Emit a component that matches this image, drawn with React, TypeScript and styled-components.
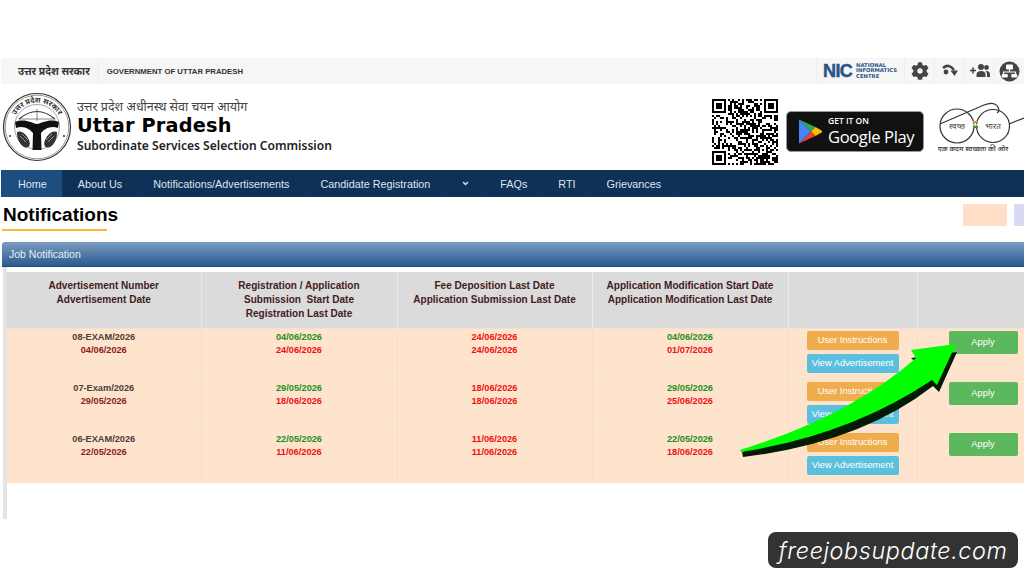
import React from "react"
import styled, {createGlobalStyle} from "styled-components"
import {FaCog, FaAngleDown} from "react-icons/fa"

const GlobalStyle = createGlobalStyle`
    html, body {
        margin: 0;
        padding: 0;
        background: #fff;
        font-family: "Liberation Sans", Arial, sans-serif;
    }
    #root {
        width: 1024px;
        height: 576px;
    }
`;

const Page = styled.div`
    position: relative;
    width: 1024px;
    height: 576px;
    padding-top: 58px;
    box-sizing: border-box;
    overflow: hidden;
    background: #fff;
`;

const TopBar = styled.div`
    display: flex;
    align-items: stretch;
    height: 26px;
    margin-left: 1px;
    background: #f6f6f6;
`;

const StateName = styled.div`
    display: flex;
    align-items: center;
    padding: 0 8px 0 17px;
    border-right: 1px solid #eee;
    font-family: "Noto Sans", "Liberation Sans", sans-serif;
    font-size: 10.3px;
    font-weight: 700;
    color: #333;
`;

const GovName = styled.div`
    display: flex;
    align-items: center;
    flex: 1;
    padding-left: 8px;
    font-size: 7.75px;
    font-weight: 700;
    color: #333;
`;

const NicCell = styled.div`
    display: flex;
    align-items: center;
    width: 88px;
    padding-left: 6px;
    box-sizing: border-box;
    border-left: 1px solid #eee;
    color: #2a5585;
`;

const NicMark = styled.span`
    width: 33px;
    font-size: 18px;
    font-weight: 700;
    letter-spacing: -0.6px;
    -webkit-text-stroke: 0.5px #2a5585;
`;

const NicWords = styled.span`
    font-family: "DejaVu Sans", sans-serif;
    font-size: 5.3px;
    font-weight: 700;
    line-height: 5.4px;
`;

const IconCell = styled.div`
    display: flex;
    align-items: center;
    justify-content: center;
    width: 30px;
    box-sizing: border-box;
    border-left: 1px solid #eee;
    color: #444;
`;

const Masthead = styled.header`
    display: flex;
    align-items: center;
    height: 86px;
    padding-left: 2px;
    box-sizing: border-box;
`;

const Titles = styled.div`
    display: flex;
    flex-direction: column;
    margin-left: 5px;
    margin-top: -2px;
    flex: 1;
`;

const HindiTitle = styled.div`
    font-family: "Noto Sans", "Liberation Sans", sans-serif;
    font-size: 12.5px;
    line-height: 16px;
    color: #444;
`;

const MainTitle = styled.div`
    font-family: "DejaVu Sans", sans-serif;
    font-size: 19.3px;
    font-weight: 700;
    line-height: 22px;
    letter-spacing: 0.2px;
    color: #000;
`;

const SubTitle = styled.div`
    font-family: "Noto Sans", sans-serif;
    font-size: 12.05px;
    line-height: 17px;
    font-weight: 600;
    color: #222;
`;

const QrSvg = styled.svg`
    margin-top: 10px;
`;

const PlayBadge = styled.div`
    display: flex;
    align-items: center;
    width: 138px;
    height: 41px;
    margin: 8px 0 0 8px;
    padding-left: 11px;
    box-sizing: border-box;
    border-radius: 5px;
    background: #111;
    border: 1px solid #999;
    color: #fff;
`;

const PlayText = styled.div`
    display: flex;
    flex-direction: column;
    margin-left: 6px;
`;

const PlaySmall = styled.span`
    font-family: "Open Sans", sans-serif;
    font-size: 8.5px;
    line-height: 10px;
    font-weight: 600;
`;

const PlayBig = styled.span`
    font-family: "Open Sans", sans-serif;
    font-size: 16.6px;
    line-height: 21px;
    font-weight: 500;
    letter-spacing: -0.4px;
`;

const SwachhSvg = styled.svg`
    margin: -4px 0 0 4px;
    flex: none;
`;

const Nav = styled.nav`
    display: flex;
    align-items: stretch;
    height: 27px;
    margin-left: 1px;
    background: #0f3057;
`;

const NavItem = styled.div<{$active?: boolean}>`
    display: flex;
    align-items: center;
    padding: 0 15px;
    font-size: 10.8px;
    color: #dfe6ee;
    border-right: 1px solid #12355f;
    background: ${(props): string => props.$active ? "#1e4d80" : "transparent"};

    &:first-child{
        padding-left: 17px;
    }
`;

const NavCaret = styled(NavItem)`
    padding: 0 14px 0 15px;
`;

const HeadingRow = styled.div`
    display: flex;
    justify-content: space-between;
    align-items: flex-start;
    height: 45px;
    padding: 7px 0 0 2px;
    box-sizing: border-box;
`;

const Heading = styled.h2`
    margin: 0;
    width: 104px;
    padding: 0 0 3px 1px;
    border-bottom: 2px solid #fbb83a;
    font-size: 19px;
    line-height: 22px;
    font-weight: 700;
    white-space: nowrap;
    color: #000;
`;

const Pills = styled.div`
    display: flex;
    gap: 7px;
    width: 61px;
`;

const Pill = styled.div<{$color: string; $width: number}>`
    height: 22px;
    width: ${(props): number => props.$width}px;
    background: ${(props): string => props.$color};
`;

const Panel = styled.section`
    margin-left: 2px;
`;

const PanelHead = styled.div`
    display: flex;
    align-items: center;
    height: 24px;
    padding-left: 7px;
    border-radius: 3px 0 0 0;
    font-size: 10.5px;
    color: #e6edf5;
    background: linear-gradient(#7b9cc1, #2a5a8e);
    border-bottom: 1px solid #1c4a7b;
`;

const PanelBody = styled.div`
    height: 252px;
    padding-top: 5px;
    box-sizing: border-box;
    margin-left: 1px;
    border-left: 4px solid #e4e4e4;
`;

const Table = styled.table`
    width: 1042px;
    border-collapse: collapse;
    table-layout: fixed;
`;

const Th = styled.th<{$width: number}>`
    width: ${(props): number => props.$width}px;
    height: 56px;
    padding: 7px 4px 0;
    box-sizing: border-box;
    vertical-align: top;
    background: #dcdbdb;
    border-right: 1px solid #e8e8e8;
    font-size: 10.05px;
    line-height: 14px;
    font-weight: 700;
    color: #43201f;
`;

const Td = styled.td<{$height: number}>`
    height: ${(props): number => props.$height}px;
    padding: 2px 4px 0;
    box-sizing: border-box;
    vertical-align: top;
    text-align: center;
    background: #fee3cd;
    border-right: 1px solid #f3ddcb;
    border-top: 1px solid #f4e0d0;
`;

const CellLine = styled.div<{$tone: "dark" | "maroon" | "green" | "red"}>`
    font-size: 9.2px;
    line-height: 13px;
    font-weight: 700;
    color: ${(props): string => ({
        dark: "#4a4038",
        maroon: "#8c1c1c",
        green: "#1f8f1f",
        red: "#f01010",
    })[props.$tone]};
`;

const Btn = styled.div<{$color: string; $width: number; $height: number}>`
    display: flex;
    align-items: center;
    justify-content: center;
    width: ${(props): number => props.$width}px;
    height: ${(props): number => props.$height}px;
    margin: 0 auto 4px;
    border-radius: 2px;
    font-size: 9.3px;
    color: #fff;
    white-space: nowrap;
    background: ${(props): string => props.$color};
`;

const ArrowOverlay = styled.svg`
    position: absolute;
    left: 730px;
    top: 335px;
`;

const Watermark = styled.div`
    position: absolute;
    left: 768px;
    top: 532px;
    width: 250px;
    height: 36px;
    display: flex;
    align-items: center;
    justify-content: center;
    border-radius: 8px;
    background: #333;
    color: #fff;
    font-family: Inter, sans-serif;
    font-style: italic;
    font-weight: 300;
    font-size: 23.4px;
    letter-spacing: 0.6px;
`;

// deterministic fake qr pattern, 33 modules
const qrCells = (): string => {
    let seed = 71
    let d = ""
    const size = 33
    const inFinder = (x: number, y: number): boolean =>
        (x < 8 && y < 8) || (x > size - 9 && y < 8) || (x < 8 && y > size - 9)
    for (let y = 0; y < size; y++) {
        for (let x = 0; x < size; x++) {
            seed = (seed * 1103515245 + 12345) & 0x7fffffff
            if (!inFinder(x, y) && (seed >> 16) % 100 < 52) {
                d += `M${x} ${y}h1v1h-1z`
            }
        }
    }
    return d
}

const Finder: React.FC<{x: number; y: number}> = ({x, y}) => (
    <g>
        <path d={`M${x} ${y}h7v7h-7zM${x + 1} ${y + 1}v5h5v-5z`} fillRule="evenodd" fill="#000" />
        <rect x={x + 2} y={y + 2} width={3} height={3} fill="#000" />
    </g>
)

const QrCode: React.FC = () => (
    <QrSvg width="66" height="66" viewBox="0 0 33 33" shapeRendering="crispEdges">
        <path d={qrCells()} fill="#000" />
        <Finder x={0} y={0} />
        <Finder x={26} y={0} />
        <Finder x={0} y={26} />
    </QrSvg>
)

const Emblem: React.FC = () => (
    <svg width="70" height="70" viewBox="0 0 70 70">
        <defs>
            <path id="seal-arc" d="M12.6 45A24.5 24.5 0 1 1 57.4 45" />
        </defs>
        <circle cx="35" cy="35" r="33.5" fill="none" stroke="#333" strokeWidth="1.2" />
        <circle cx="35" cy="35" r="31.8" fill="none" stroke="#555" strokeWidth="0.6" />
        <circle cx="35" cy="35" r="22.5" fill="none" stroke="#666" strokeWidth="0.6" />
        <text fontFamily="Noto Sans, sans-serif" fontSize="7.5" fontWeight="700" fill="#333" textAnchor="middle">
            <textPath href="#seal-arc" startOffset="50%">उत्तर प्रदेश सरकार</textPath>
        </text>
        <path d="M17 27Q35 12 53 27" fill="none" stroke="#333" strokeWidth="1.2" />
        <path d="M17 27H53M35 17V29" stroke="#555" strokeWidth="0.7" />
        <path d="M13 30C22 26 30 31 35 32C40 31 48 26 57 30L56 36C49 33 42 37 39 41L39.5 58H30.5L31 41C28 37 21 33 14 36Z" fill="#111" />
        <path d="M15 40C20 38 24 42 27 48C29 53 27 57 22 55C17 52 15 46 15 40Z" fill="#333" />
        <path d="M55 40C50 38 46 42 43 48C41 53 43 57 48 55C53 52 55 46 55 40Z" fill="#333" />
        <path d="M18 44L24 50M20 42L26 48M52 44L46 50M50 42L44 48" stroke="#bbb" strokeWidth="0.7" />
        <circle cx="8" cy="44" r="1" fill="#333" />
        <circle cx="62" cy="44" r="1" fill="#333" />
    </svg>
)

const PlayLogo: React.FC = () => (
    <svg width="24" height="27" viewBox="0 0 24 27">
        <path d="M1 1.5V25.5L13 13.5Z" fill="#4285f4" />
        <path d="M1 1.5L13 13.5L17.5 9Z" fill="#34a853" />
        <path d="M1 25.5L13 13.5L17.5 18Z" fill="#ea4335" />
        <path d="M17.5 9L23.5 12.5Q24.5 13.5 23.5 14.5L17.5 18L13 13.5Z" fill="#fbbc04" />
    </svg>
)

const SwachhLogo: React.FC = () => (
    <SwachhSvg width="96" height="66" viewBox="0 0 96 66">
        <circle cx="29" cy="34" r="17" fill="none" stroke="#333" strokeWidth="1.2" />
        <circle cx="65" cy="34" r="16.5" fill="none" stroke="#333" strokeWidth="1.2" />
        <rect x="45" y="29" width="5" height="2" fill="#f08a24" />
        <rect x="45" y="32" width="5" height="1.4" fill="#ddd" />
        <rect x="45" y="34" width="5" height="2" fill="#3a9b3a" />
        <path d="M12 32L56 13Q66 9 70 15Q72 19 69 21M81 32L96 26" fill="none" stroke="#333" strokeWidth="1.2" />
        <text x="29" y="37" textAnchor="middle" fontFamily="Noto Sans, sans-serif" fontSize="8" fill="#444">स्वच्छ</text>
        <text x="65" y="37" textAnchor="middle" fontFamily="Noto Sans, sans-serif" fontSize="8" fill="#444">भारत</text>
        <text x="45" y="59" textAnchor="middle" fontFamily="Noto Sans, sans-serif" fontSize="7" fontWeight="600" fill="#444">एक कदम स्वच्छता की ओर</text>
    </SwachhSvg>
)

const ReplyIcon: React.FC = () => (
    <svg width="18" height="16" viewBox="0 0 18 16">
        <circle cx="5" cy="9" r="2.4" fill="#444" />
        <path d="M2 5Q8 0 13 7" fill="none" stroke="#444" strokeWidth="2.6" />
        <path d="M9.5 7.5H17L13.5 13Z" fill="#444" />
    </svg>
)

const GroupAddIcon: React.FC = () => (
    <svg width="20" height="16" viewBox="0 0 20 16">
        <path d="M0 7.5H6M3 4.5V10.5" stroke="#444" strokeWidth="1.6" />
        <circle cx="11" cy="4" r="3" fill="#444" />
        <circle cx="16.5" cy="4.5" r="2.4" fill="#444" />
        <path d="M6.5 14V11.5Q6.5 8 11 8Q15.5 8 15.5 11.5V14Z" fill="#444" />
        <path d="M16.5 8Q20 8 20 11.5V14H17V11Q17 9.5 15.5 8.2Z" fill="#444" />
    </svg>
)

const NetworkIcon: React.FC = () => (
    <svg width="21" height="21" viewBox="0 0 21 21">
        <circle cx="10.5" cy="10.5" r="10" fill="#444" />
        <rect x="7" y="3.5" width="7" height="5" rx="1" fill="#fff" />
        <path d="M4.5 14V11H16.5V14M10.5 8V11" fill="none" stroke="#fff" strokeWidth="1.2" />
        <rect x="2.8" y="13" width="6" height="3.6" rx="1" fill="#fff" />
        <rect x="12.2" y="13" width="6" height="3.6" rx="1" fill="#fff" />
    </svg>
)

const Arrow: React.FC = () => (
    <ArrowOverlay width="235" height="130" viewBox="0 0 235 130">
        <path d="M13 122Q130 108 203 51L209 57L227 17L181 23L187 28Q110 85 12 117Z" fill="#041a04" />
        <path d="M10 115Q120 81 186 23L181 15L226 9L207 50L202 45Q120 100 11 117Z" fill="#00ff00" />
    </ArrowOverlay>
)

const columns = [194, 196, 195, 196, 129, 132]

const rows = [
    {
        height: 51,
        adv: ["08-EXAM/2026", "04/06/2026"],
        reg: ["04/06/2026", "24/06/2026"],
        fee: ["24/06/2026", "24/06/2026"],
        mod: ["04/06/2026", "01/07/2026"],
    },
    {
        height: 51,
        adv: ["07-Exam/2026", "29/05/2026"],
        reg: ["29/05/2026", "18/06/2026"],
        fee: ["18/06/2026", "18/06/2026"],
        mod: ["29/05/2026", "25/06/2026"],
    },
    {
        height: 53,
        adv: ["06-EXAM/2026", "22/05/2026"],
        reg: ["22/05/2026", "11/06/2026"],
        fee: ["11/06/2026", "11/06/2026"],
        mod: ["22/05/2026", "18/06/2026"],
    },
]

const App: React.FC = () => {
    return (
        <Page>
            <GlobalStyle />
            <TopBar>
                <StateName>उत्तर प्रदेश सरकार</StateName>
                <GovName>GOVERNMENT OF UTTAR PRADESH</GovName>
                <NicCell>
                    <NicMark>NIC</NicMark>
                    <NicWords>NATIONAL<br />INFORMATICS<br />CENTRE</NicWords>
                </NicCell>
                <IconCell><FaCog size={18} /></IconCell>
                <IconCell><ReplyIcon /></IconCell>
                <IconCell><GroupAddIcon /></IconCell>
                <IconCell><NetworkIcon /></IconCell>
            </TopBar>
            <Masthead>
                <Emblem />
                <Titles>
                    <HindiTitle>उत्तर प्रदेश अधीनस्थ सेवा चयन आयोग</HindiTitle>
                    <MainTitle>Uttar Pradesh</MainTitle>
                    <SubTitle>Subordinate Services Selection Commission</SubTitle>
                </Titles>
                <QrCode />
                <PlayBadge>
                    <PlayLogo />
                    <PlayText>
                        <PlaySmall>GET IT ON</PlaySmall>
                        <PlayBig>Google Play</PlayBig>
                    </PlayText>
                </PlayBadge>
                <SwachhLogo />
            </Masthead>
            <Nav>
                <NavItem $active>Home</NavItem>
                <NavItem>About Us</NavItem>
                <NavItem>Notifications/Advertisements</NavItem>
                <NavItem>Candidate Registration</NavItem>
                <NavCaret><FaAngleDown size={9} /></NavCaret>
                <NavItem>FAQs</NavItem>
                <NavItem>RTI</NavItem>
                <NavItem>Grievances</NavItem>
            </Nav>
            <HeadingRow>
                <Heading>Notifications</Heading>
                <Pills>
                    <Pill $color="#ffdfc8" $width={44} />
                    <Pill $color="#d9d9f6" $width={10} />
                </Pills>
            </HeadingRow>
            <Panel>
                <PanelHead>Job Notification</PanelHead>
                <PanelBody>
                    <Table>
                        <thead>
                            <tr>
                                <Th $width={columns[0]}>Advertisement Number<br />Advertisement Date</Th>
                                <Th $width={columns[1]}>Registration / Application<br />Submission&nbsp; Start Date<br />Registration Last Date</Th>
                                <Th $width={columns[2]}>Fee Deposition Last Date<br />Application Submission Last Date</Th>
                                <Th $width={columns[3]}>Application Modification Start Date<br />Application Modification Last Date</Th>
                                <Th $width={columns[4]} />
                                <Th $width={columns[5]} />
                            </tr>
                        </thead>
                        <tbody>
                            {rows.map((row) => (
                                <tr key={row.adv[0]}>
                                    <Td $height={row.height}>
                                        <CellLine $tone="dark">{row.adv[0]}</CellLine>
                                        <CellLine $tone="maroon">{row.adv[1]}</CellLine>
                                    </Td>
                                    <Td $height={row.height}>
                                        <CellLine $tone="green">{row.reg[0]}</CellLine>
                                        <CellLine $tone="red">{row.reg[1]}</CellLine>
                                    </Td>
                                    <Td $height={row.height}>
                                        <CellLine $tone="red">{row.fee[0]}</CellLine>
                                        <CellLine $tone="red">{row.fee[1]}</CellLine>
                                    </Td>
                                    <Td $height={row.height}>
                                        <CellLine $tone="green">{row.mod[0]}</CellLine>
                                        <CellLine $tone="red">{row.mod[1]}</CellLine>
                                    </Td>
                                    <Td $height={row.height}>
                                        <Btn $color="#f0ad4e" $width={92} $height={19}>User Instructions</Btn>
                                        <Btn $color="#5bc0de" $width={92} $height={19}>View Advertisement</Btn>
                                    </Td>
                                    <Td $height={row.height}>
                                        <Btn $color="#5cb85c" $width={69} $height={23}>Apply</Btn>
                                    </Td>
                                </tr>
                            ))}
                        </tbody>
                    </Table>
                </PanelBody>
            </Panel>
            <Arrow />
            <Watermark>freejobsupdate.com</Watermark>
        </Page>
    )
}

export default App;
